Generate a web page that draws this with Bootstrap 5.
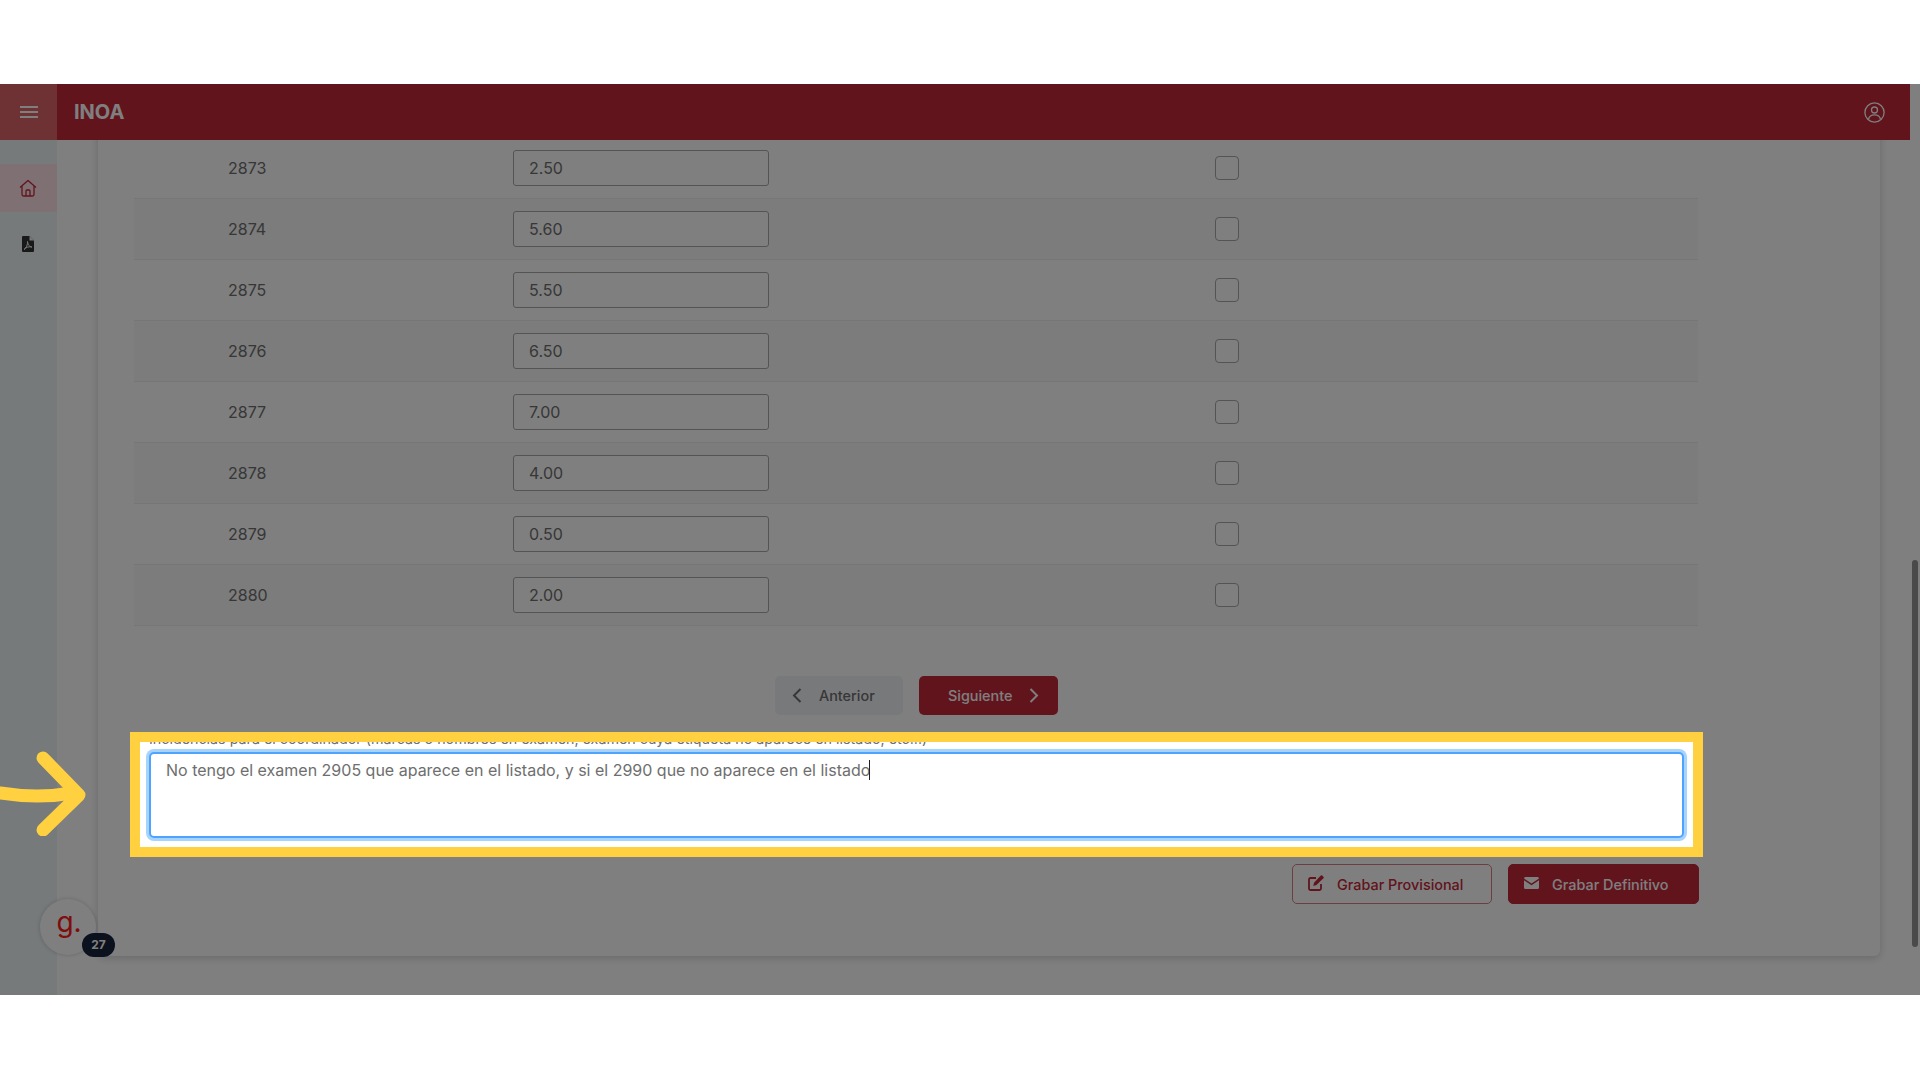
<!DOCTYPE html>
<html lang="es">
<head>
    <meta charset="UTF-8">
    <title>INOA</title>
    <link href="https://cdn.jsdelivr.net/npm/bootstrap@5.3.0/dist/css/bootstrap.min.css" rel="stylesheet">
    <style>
        body {
            font-family: Inter, "Liberation Sans", sans-serif;
            font-size: 16px;
            color: #6e6e6e;
            background-color: #fff;
            padding: 84px 0 85px;
            overflow: hidden;
        }
        .app-screen {
            height: 911px;
            position: relative;
            background-color: #fff;
        }
        .dim-layer {
            position: absolute;
            inset: 0;
            background-color: rgba(0, 0, 0, .5);
            z-index: 20;
        }
        .app-top {
            height: 56px;
            background-color: #c4283a;
            position: relative;
            z-index: 5;
        }
        .menu-toggle {
            width: 57px;
            background-color: #dc6268;
        }
        .brand-name {
            font-size: 20px;
            font-weight: 700;
            color: #fff;
            margin-left: 17px;
        }
        .user-link { margin-right: 25px; }
        .side-rail {
            width: 57px;
            background-color: #eef4f7;
            padding-top: 24px;
        }
        .rail-item {
            height: 48px;
            margin-bottom: 8px;
            padding-right: 1px;
        }
        .rail-item-active { background-color: #fde0e6; }
        .app-main {
            padding: 0 30px 0 41px;
            overflow: hidden;
        }
        .exam-card {
            background-color: #fff;
            margin-top: -40px;
            height: 856px;
            padding: 37.5px 182px 0 36px;
            border-radius: 0 0 6px 6px;
            box-shadow: 0 2px 8px rgba(0, 0, 0, .18);
        }
        .grade-table { margin-bottom: 49.5px; --bs-table-bg: transparent; color: inherit; }
        .grade-table td {
            height: 61px;
            padding: 0;
            vertical-align: middle;
            border-bottom: 1px solid #eaecea;
            color: #6e6e6e;
        }
        .grade-table tr:nth-child(even) td { background-color: #f6f8f7; }
        .num-cell { width: 379px; padding-left: 94px !important; }
        .input-cell { width: 702px; }
        .grade-input {
            width: 256px;
            height: 36px;
            padding: 0 15px;
            font-size: 16px;
            color: #6e6e6e;
            border: 1px solid #a8a8a8;
            border-radius: 3px;
        }
        .grade-check {
            width: 24px;
            height: 24px;
            margin: 0;
            border: 1px solid #a8a8a8;
            border-radius: 4px;
        }
        .pager-row { padding-left: 1px; }
        .pager-btn {
            height: 39px;
            font-size: 14.4px;
            font-weight: 500;
            border-radius: 5px;
            border: 1px solid transparent;
            display: inline-flex;
            align-items: center;
            padding: 1px 0 0;
        }
        .pager-btn svg { margin-top: -1px; }
        .pager-prev { width: 128px; background-color: #f1f3f6; color: #6e6e6e; gap: 17px; padding-left: 16px; }
        .pager-next { width: 139px; background-color: #c4283a; color: #fff; gap: 17px; padding-left: 28px; }
        .spot-box {
            position: relative;
            z-index: 30;
            margin: 17px -5px 0 -4px;
            height: 125px;
            border: 10px solid #ffd040;
            background-color: #fff;
            overflow: hidden;
            padding: 10px 9px;
        }
        .notes-label {
            position: absolute;
            top: -14px;
            left: 9px;
            font-size: 14.3px;
            white-space: nowrap;
            margin: 0;
        }
        .notes-input {
            height: 86px;
            padding: 4px 15px;
            font-size: 16px;
            color: #6e6e6e;
            border: 2px solid #4ea3ff;
            border-radius: 5px;
            box-shadow: 0 0 0 3px #a6d4ff;
            resize: none;
        }
        .notes-input:focus { border-color: #4ea3ff; box-shadow: 0 0 0 3px #a6d4ff; color: #6e6e6e; }
        .text-caret {
            position: absolute;
            left: 729px;
            top: 18px;
            width: 1px;
            height: 20px;
            background-color: #222;
        }
        .save-btn {
            height: 40px;
            font-size: 14.4px;
            font-weight: 500;
            border-radius: 5px;
            display: inline-flex;
            align-items: center;
            gap: 13px;
            padding: 2px 0 0 15px;
        }
        .save-btn svg { margin-top: -4px; }
        .save-draft { width: 200px; background-color: #fff; color: #c4283a; border: 1px solid #dc7a85; }
        .save-final { width: 191px; background-color: #c4283a; color: #fff; border: 1px solid #c4283a; }
        .save-row { margin: 7px -1px 0 0; }
        .help-bubble {
            position: absolute;
            left: 40px;
            top: 815px;
            width: 56px;
            height: 56px;
            border-radius: 50%;
            background-color: #fff;
            box-shadow: 0 0 4px rgba(0, 0, 0, .2);
            color: #ff1a1a;
            font-family: Inter, sans-serif;
            font-size: 28px;
            line-height: 46px;
            text-align: center;
            padding-left: 2px;
            z-index: 6;
        }
        .help-count {
            position: absolute;
            left: 82px;
            top: 849px;
            width: 33px;
            height: 24px;
            line-height: 24px;
            border-radius: 12px;
            background-color: #16223a;
            color: #fff;
            font-size: 12px;
            font-weight: 700;
            text-align: center;
            z-index: 7;
        }
        .spot-arrow {
            position: absolute;
            left: 0;
            top: 660px;
            z-index: 30;
        }
        .page-scroll { width: 10px; background-color: #fff; }
        .page-scroll-thumb {
            width: 6px;
            height: 387px;
            margin: 476px 0 0 2px;
            border-radius: 3px;
            background-color: #949494;
        }
    </style>
</head>
<body>

<div class="app-screen d-flex">
    <div class="flex-grow-1 d-flex flex-column overflow-hidden">
        <!-- top bar -->
        <div class="app-top d-flex align-items-stretch">
            <div class="menu-toggle d-flex align-items-center justify-content-center">
                <svg width="18" height="12" viewBox="0 0 18 12" fill="none" stroke="#fff" stroke-width="2"><path d="M0 1h18M0 6h18M0 11h18"/></svg>
            </div>
            <div class="brand-name d-flex align-items-center">INOA</div>
            <div class="user-link ms-auto d-flex align-items-center">
                <svg width="21" height="21" viewBox="0 0 21 21" fill="none" stroke="#fff" stroke-width="1.3"><circle cx="10.5" cy="10.5" r="9.6"/><circle cx="10.5" cy="8" r="3"/><path d="M4.6 17c.6-3 3-4.2 5.9-4.2s5.300 1.200 5.900 4.200"/></svg>
            </div>
        </div>

        <div class="d-flex flex-grow-1 overflow-hidden">
            <!-- side rail -->
            <div class="side-rail flex-shrink-0">
                <div class="rail-item rail-item-active d-flex align-items-center justify-content-center">
                    <svg width="18" height="18" viewBox="0 0 18 18" fill="none" stroke="#c4283a" stroke-width="1.300" stroke-linejoin="round"><path d="M1 8.500 9 1.500l8 7M3 7v8.500a1.500 1.500 0 0 0 1.500 1.500h9a1.500 1.500 0 0 0 1.500-1.500V7"/><path d="M7 17v-5a1 1 0 0 1 1-1h2a1 1 0 0 1 1 1v5"/></svg>
                </div>
                <div class="rail-item d-flex align-items-center justify-content-center">
                    <svg width="12" height="16" viewBox="0 0 12 16"><path fill="#333" d="M0 1a1 1 0 0 1 1-1h6.500L12 4.500V15a1 1 0 0 1-1 1H1a1 1 0 0 1-1-1z"/><path fill="#eef4f7" d="M7.500 0 12 4.500H7.500z"/><path fill="none" stroke="#eef4f7" stroke-width="1" d="M5.500 5.500c.5 3-1.500 7-3.500 8 1-2 6-3.500 8-2.500-2 .5-4-2.500-4.500-5.500z"/></svg>
                </div>
            </div>

            <!-- card -->
            <div class="app-main flex-grow-1">
                <div class="exam-card">
                    <table class="table grade-table">
                        <tbody id="gradeRows"></tbody>
                    </table>

                    <div class="pager-row d-flex justify-content-center gap-3">
                        <button type="button" class="pager-btn pager-prev">
                            <svg width="10" height="15" viewBox="0 0 10 15" fill="none" stroke="#6e6e6e" stroke-width="2"><path d="M8.500 1 2 7.500 8.500 14"/></svg>
                            Anterior
                        </button>
                        <button type="button" class="pager-btn pager-next">
                            Siguiente
                            <svg width="10" height="15" viewBox="0 0 10 15" fill="none" stroke="#fff" stroke-width="2"><path d="M1.500 1 8 7.500 1.500 14"/></svg>
                        </button>
                    </div>

                    <div class="spot-box">
                        <label class="notes-label" for="notes">Incidencias para el coordinador (marcas o nombres en examen, examen cuya etiqueta no aparece en listado, etc...)</label>
                        <textarea id="notes" class="form-control notes-input">No tengo el examen 2905 que aparece en el listado, y si el 2990 que no aparece en el listado</textarea>
                        <span class="text-caret"></span>
                    </div>

                    <div class="save-row d-flex justify-content-end gap-3">
                        <button type="button" class="save-btn save-draft">
                            <svg width="16" height="16" viewBox="0 0 16 16" fill="none" stroke="#c4283a" stroke-width="1.800"><path d="M13 9v4.500a1.500 1.500 0 0 1-1.500 1.500h-9A1.500 1.500 0 0 1 1 13.500v-9A1.500 1.500 0 0 1 2.500 3H8"/><path fill="#c4283a" stroke="none" d="M12.800.6a1 1 0 0 1 1.400 0l1.200 1.200a1 1 0 0 1 0 1.400L8.500 10.100 5.300 11l.7-3.300z"/></svg>
                            Grabar Provisional
                        </button>
                        <button type="button" class="save-btn save-final">
                            <svg width="15" height="12" viewBox="0 0 15 12"><path fill="#fff" d="M1.500 0h12A1.500 1.500 0 0 1 15 1.500L7.500 6.500 0 1.500A1.500 1.500 0 0 1 1.500 0zM0 3.300l7.500 5 7.500-5v7.200a1.500 1.500 0 0 1-1.500 1.500h-12A1.500 1.500 0 0 1 0 10.500z"/></svg>
                            Grabar Definitivo
                        </button>
                    </div>
                </div>
            </div>
        </div>
    </div>

    <div class="page-scroll flex-shrink-0">
        <div class="page-scroll-thumb"></div>
    </div>

    <div class="help-bubble">g.</div>
    <div class="help-count">27</div>

    <div class="dim-layer"></div>

    <svg class="spot-arrow" width="92" height="92" viewBox="0 0 92 92" fill="none" stroke="#ffd040" stroke-width="13" stroke-linecap="round" stroke-linejoin="round">
        <path d="M43 14 79 51 43 86"/>
        <path d="M0 49c25 4 50 4 72 0"/>
    </svg>
</div>

<script>
    // grade rows for this page of the exam list
    const grades = [[2873, '2.50'], [2874, '5.60'], [2875, '5.50'], [2876, '6.50'], [2877, '7.00'], [2878, '4.00'], [2879, '0.50'], [2880, '2.00']];
    document.getElementById('gradeRows').innerHTML = grades.map(g => `
        <tr>
            <td class="num-cell">${g[0]}</td>
            <td class="input-cell"><input type="text" class="grade-input" value="${g[1]}"></td>
            <td><input type="checkbox" class="form-check-input grade-check"></td>
        </tr>`).join('');
</script>
<script src="https://cdn.jsdelivr.net/npm/bootstrap@5.3.0/dist/js/bootstrap.bundle.min.js"></script>
</body>
</html>
